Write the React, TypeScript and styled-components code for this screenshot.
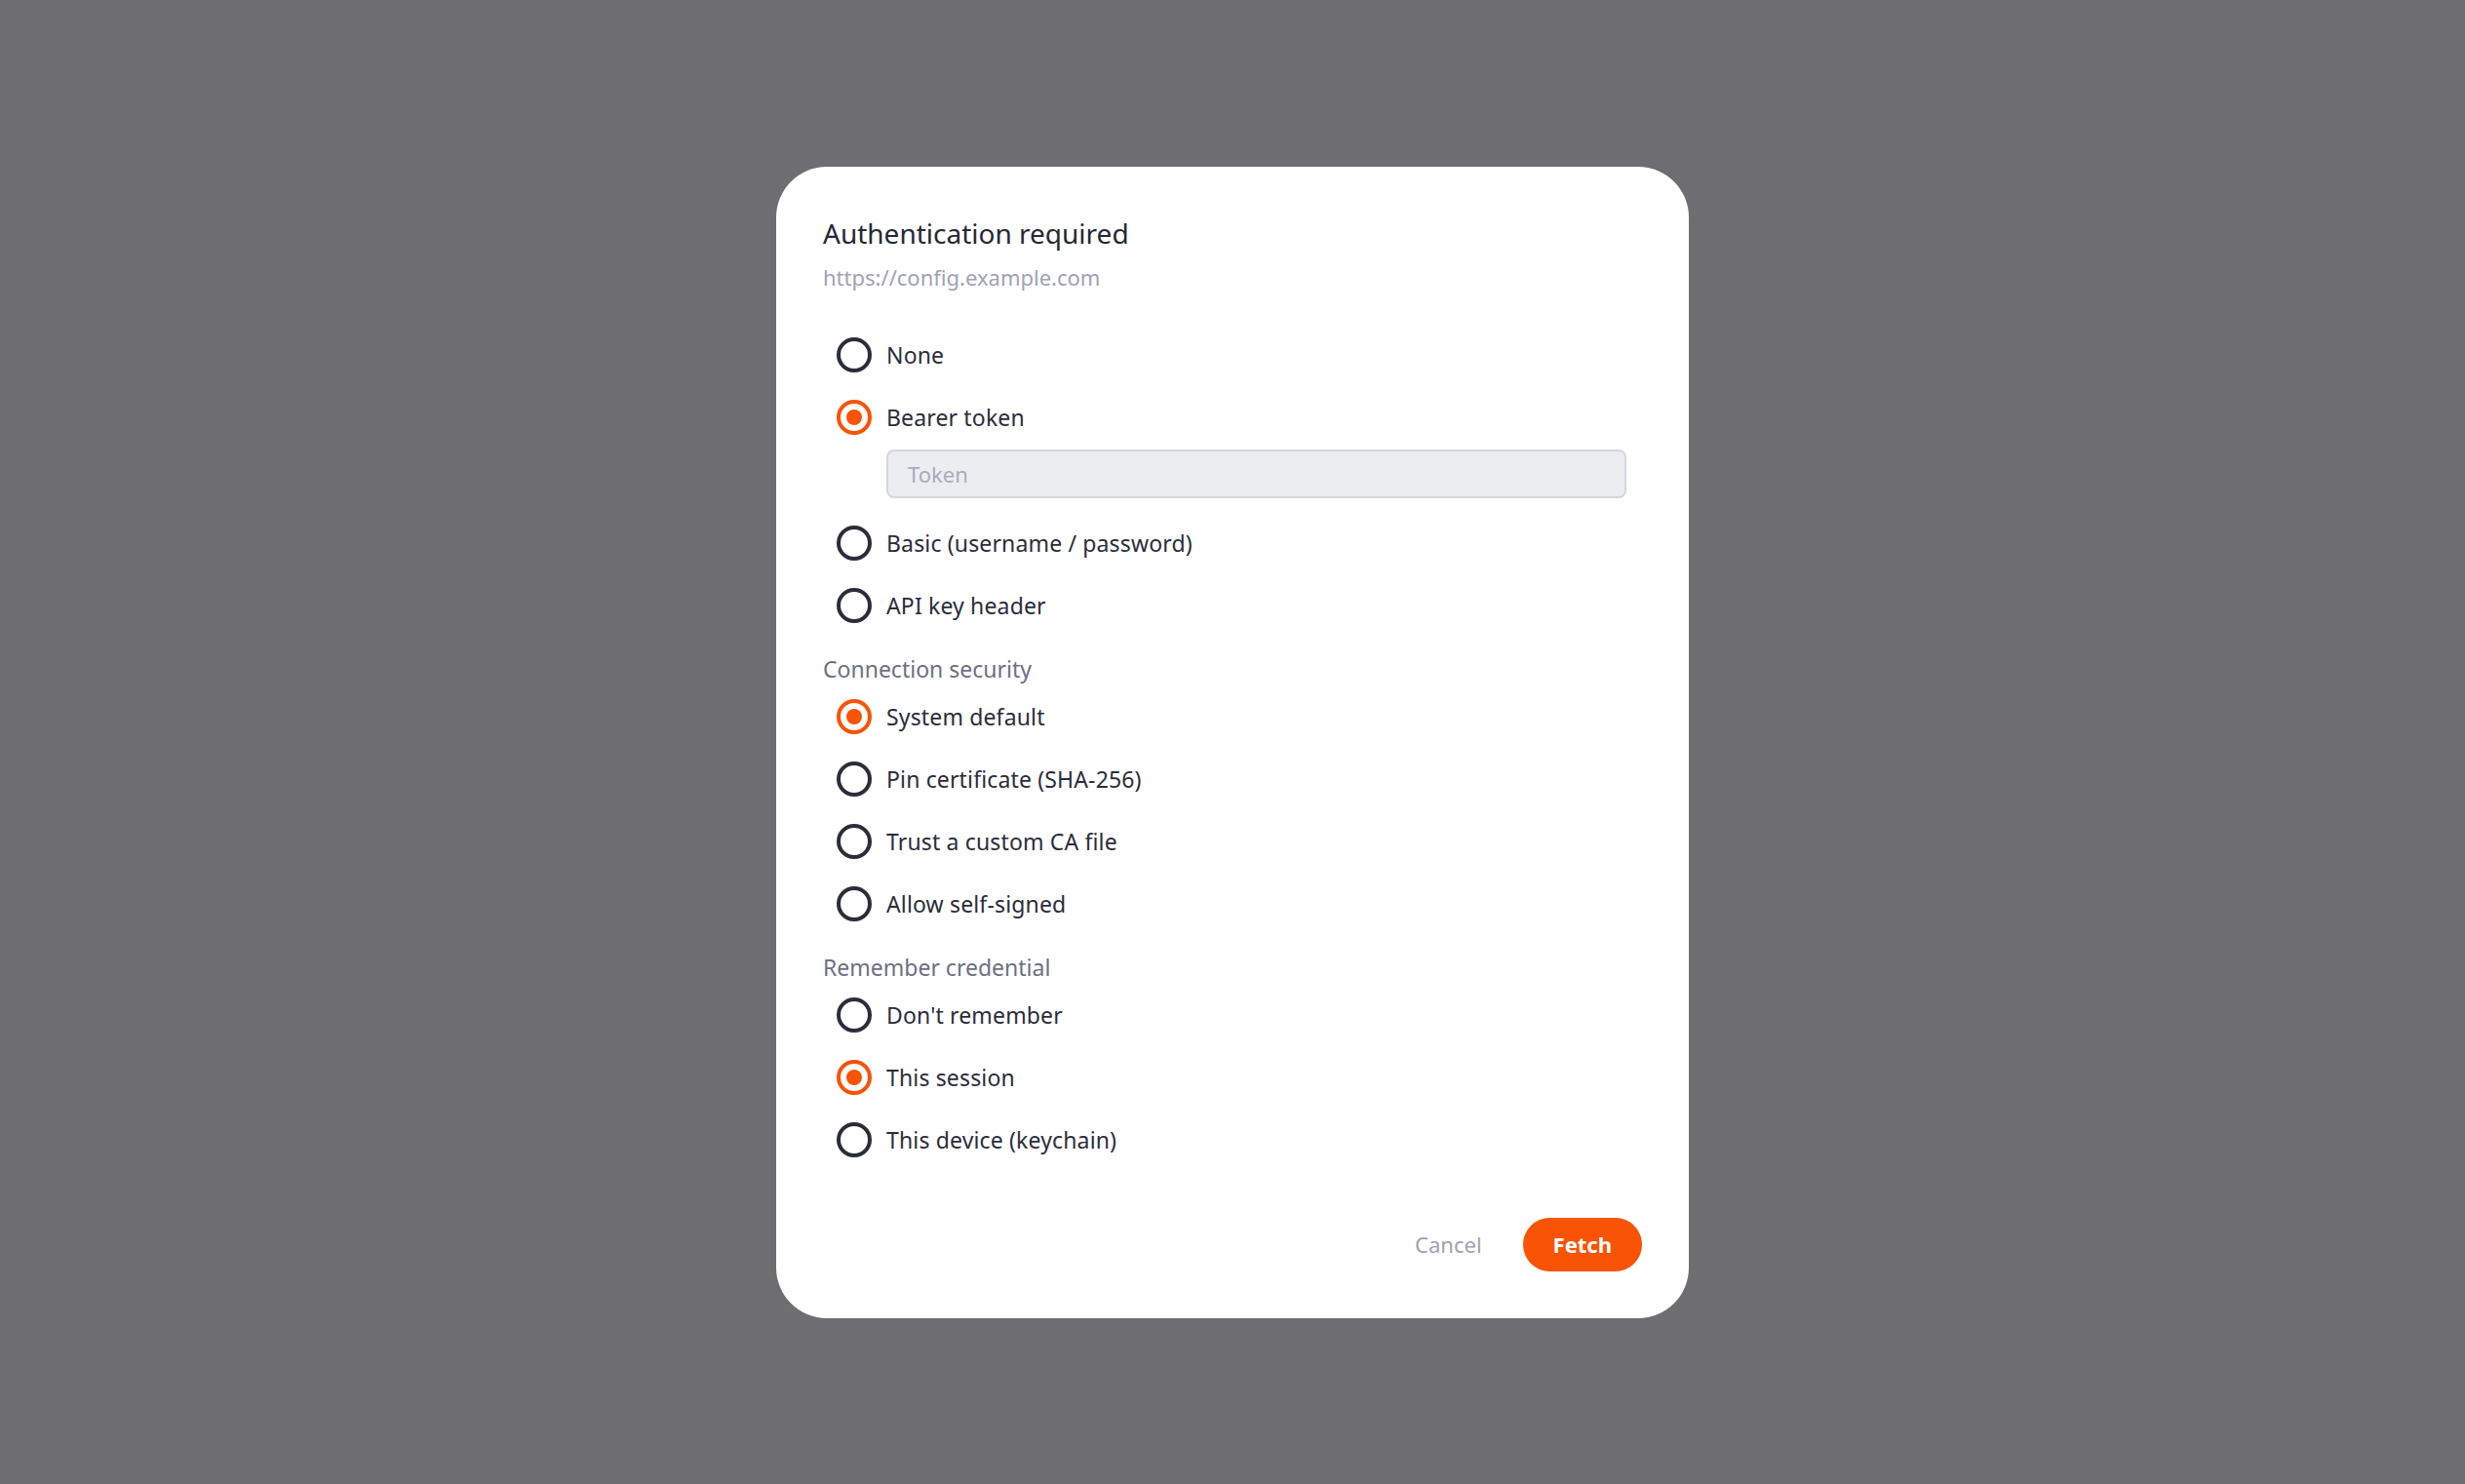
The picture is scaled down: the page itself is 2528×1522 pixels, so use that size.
import React, { useState } from 'react';
import styled, { createGlobalStyle } from 'styled-components';

const GlobalStyle = createGlobalStyle`
  html, body {
    margin: 0;
    padding: 0;
  }
  body {
    background: #6e6e70;
    font-family: "Noto Sans", "Open Sans", sans-serif;
    -webkit-font-smoothing: antialiased;
  }
`

const Backdrop = styled.div`
  min-height: 100vh;
  display: flex;
  align-items: center;
  justify-content: center;
`

const Dialog = styled.div`
  box-sizing: border-box;
  width: 936px;
  padding: 48px;
  background: #fff;
  border-radius: 52px;
  display: flex;
  flex-direction: column;
`

const Title = styled.h2`
  margin: 0;
  font-size: 28px;
  line-height: 40px;
  font-weight: 400;
  color: #262835;
`

const Origin = styled.div`
  margin-top: 10px;
  font-size: 22px;
  line-height: 30px;
  color: #a0a3b4;
`

const Options = styled.div<{ $first?: boolean }>`
  display: flex;
  flex-direction: column;
  gap: 28px;
  padding: 0 16px 0 14px;
  margin-top: ${p => (p.$first ? '47px' : '0')};
`

const OptionItem = styled.div`
  display: flex;
  flex-direction: column;
`

const OptionRow = styled.label`
  display: flex;
  align-items: center;
  gap: 15px;
  cursor: pointer;
  font-size: 23px;
  letter-spacing: 0.15px;
  line-height: 36px;
  color: #2b2d3a;
`

const RadioMark = styled.span<{ $checked: boolean }>`
  box-sizing: border-box;
  flex: none;
  width: 36px;
  height: 36px;
  border-radius: 50%;
  border: 4px solid ${p => (p.$checked ? '#f95306' : '#2b2d3a')};
  display: flex;
  align-items: center;
  justify-content: center;
`

const RadioDot = styled.span`
  width: 16px;
  height: 16px;
  border-radius: 50%;
  background: #f95306;
`

const HiddenInput = styled.input`
  display: none;
`

const SubField = styled.div`
  margin: 15px 0 0 51px;
`

const TextInput = styled.input`
  box-sizing: border-box;
  width: 100%;
  height: 50px;
  padding: 0 20px;
  border: 2px solid #d5d6de;
  border-radius: 8px;
  background: #ecedf1;
  font-family: inherit;
  font-size: 22px;
  color: #2b2d3a;
  outline: none;

  &::placeholder {
    color: #a9abbb;
  }
`

const SectionHeading = styled.div`
  margin: 31px 0 15px;
  font-size: 23px;
  line-height: 32px;
  color: #6d7083;
`

const Footer = styled.div`
  display: flex;
  justify-content: flex-end;
  align-items: center;
  gap: 20px;
  margin-top: 62px;
`

const CancelButton = styled.button`
  height: 55px;
  padding: 0 22px;
  border: none;
  background: none;
  font-family: inherit;
  font-size: 22px;
  color: #a0a3b4;
  cursor: pointer;
`

const FetchButton = styled.button`
  height: 55px;
  padding: 0 31px;
  border: none;
  border-radius: 28px;
  background: #f95306;
  font-family: inherit;
  font-size: 22px;
  font-weight: 700;
  color: #fff;
  cursor: pointer;
`

type Option = { id: string; label: string }

const authOptions: Option[] = [
  { id: 'none', label: 'None' },
  { id: 'bearer', label: 'Bearer token' },
  { id: 'basic', label: 'Basic (username / password)' },
  { id: 'apikey', label: 'API key header' },
]

const securityOptions: Option[] = [
  { id: 'system', label: 'System default' },
  { id: 'pin', label: 'Pin certificate (SHA-256)' },
  { id: 'ca', label: 'Trust a custom CA file' },
  { id: 'self', label: 'Allow self-signed' },
]

const rememberOptions: Option[] = [
  { id: 'never', label: "Don't remember" },
  { id: 'session', label: 'This session' },
  { id: 'device', label: 'This device (keychain)' },
]

type GroupProps = {
  name: string
  options: Option[]
  value: string
  onChange: (v: string) => void
  first?: boolean
  extra?: Record<string, React.ReactNode>
}

const RadioGroup = ({ name, options, value, onChange, first, extra }: GroupProps) => (
  <Options $first={first}>
    {options.map(o => (
      <OptionItem key={o.id}>
        <OptionRow>
          <HiddenInput
            type="radio"
            name={name}
            checked={value === o.id}
            onChange={() => onChange(o.id)}
          />
          <RadioMark $checked={value === o.id}>
            {value === o.id && <RadioDot />}
          </RadioMark>
          {o.label}
        </OptionRow>
        {value === o.id && extra && extra[o.id]}
      </OptionItem>
    ))}
  </Options>
)

export default function App() {
  const [auth, setAuth] = useState('bearer');
  const [security, setSecurity] = useState('system');
  const [remember, setRemember] = useState('session');
  const [token, setToken] = useState('');

  return (
    <Backdrop>
      <GlobalStyle />
      <Dialog>
        <Title>Authentication required</Title>
        <Origin>https://config.example.com</Origin>
        <RadioGroup
          first
          name="auth"
          options={authOptions}
          value={auth}
          onChange={setAuth}
          extra={{
            bearer: (
              <SubField>
                <TextInput
                  placeholder="Token"
                  value={token}
                  onChange={e => setToken(e.target.value)}
                />
              </SubField>
            ),
          }}
        />
        <SectionHeading>Connection security</SectionHeading>
        <RadioGroup name="security" options={securityOptions} value={security} onChange={setSecurity} />
        <SectionHeading>Remember credential</SectionHeading>
        <RadioGroup name="remember" options={rememberOptions} value={remember} onChange={setRemember} />
        <Footer>
          <CancelButton>Cancel</CancelButton>
          <FetchButton>Fetch</FetchButton>
        </Footer>
      </Dialog>
    </Backdrop>
  )
}
